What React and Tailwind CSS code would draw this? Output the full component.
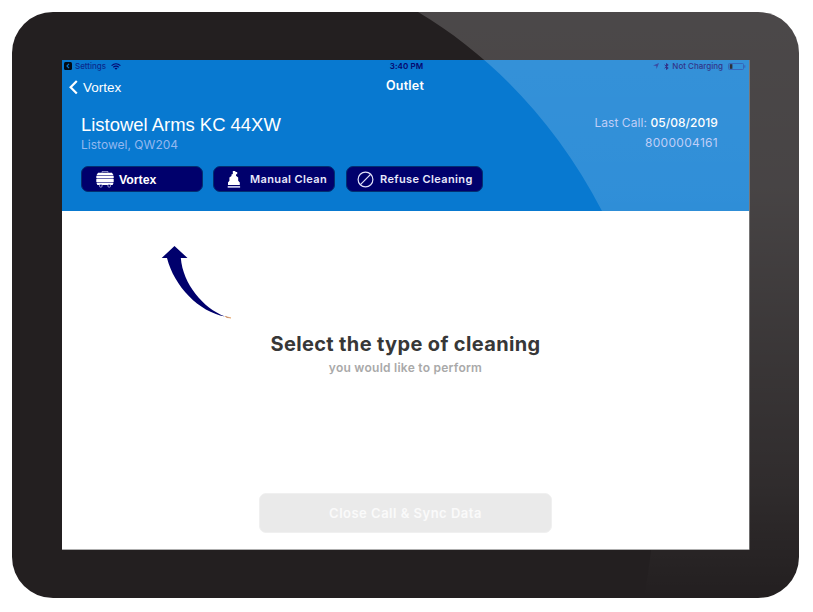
import React from "react";

const inter = "font-['Inter','Liberation_Sans',sans-serif]";
const arial = "font-['Liberation_Sans',Arial,sans-serif]";

function StatusBar() {
  return (
    <div className="flex h-3 items-center text-[8px] leading-3 text-[#0b2a8c]">
      <div className="flex flex-1 items-center pl-0.5">
        <svg className="size-2" viewBox="0 0 8 8">
          <rect width="8" height="8" rx="1.5" fill="#020a14" />
          <path d="M5 1.8 2.9 4 5 6.2" fill="none" stroke="#0879d0" strokeWidth="1.1" />
        </svg>
        <span className="ml-[3px] w-8 font-medium tracking-[-0.03px] whitespace-nowrap">Settings</span>
        <svg className="ml-1 h-[7px] w-2.5" viewBox="0 0 10 7" fill="none" stroke="#06066e" strokeWidth="1.2">
          <path d="M.6 2.6Q5-1.1 9.4 2.6M2.3 4.3Q5 2.1 7.7 4.3" />
          <path d="M5 6.7 3.5 5.3Q5 4.2 6.5 5.3Z" fill="#06066e" stroke="none" />
        </svg>
      </div>
      <span className="pl-[3px] font-semibold text-[#06066e] tracking-[0.1px]">3:40 PM</span>
      <div className="flex flex-1 items-center justify-end pr-[3px]">
        <svg className="h-1.5 w-1.5" viewBox="0 0 6 6" fill="#10278f">
          <path d="M0 2.6 6 0 3.6 6 3.2 2.9Z" />
        </svg>
        <svg className="ml-[5px] h-[7px] w-[5px]" viewBox="0 0 5 7" fill="none" stroke="#06066e" strokeWidth="1">
          <path d="M.6 1.8 4.2 5 2.5 6.5V.5L4.2 2 .6 5.2" />
        </svg>
        <span className="ml-[3px] font-medium text-[#06066e] whitespace-nowrap">Not Charging</span>
        <svg className="ml-[5px] h-[7px] w-[18px]" viewBox="0 0 18 7">
          <rect x=".5" y=".5" width="15" height="6" rx="1" fill="none" stroke="#0b41a8" strokeWidth=".9" />
          <rect x="1.8" y="1.2" width="2.6" height="4.6" fill="#020210" />
          <path d="M16.8 2.3v2.4" stroke="#0b41a8" />
        </svg>
      </div>
    </div>
  );
}

function VortexIcon() {
  return (
    <svg className="h-[17px] w-[18px]" viewBox="0 0 18 17">
      <path d="M6 1.6V.6h6v1" fill="none" stroke="#b9b9e6" strokeWidth=".8" />
      <path d="M2 1.8h14l1.4 2.2H.6Z" fill="#fff" />
      <path d="M.6 4h16.8v1H.6ZM.6 7h16.8v1H.6ZM.6 11h16.8v1H.6Z" fill="#6a6ab0" />
      <path d="M.3 5h17.4v2H.3ZM.3 8h17.4v3H.3ZM.5 12h17l-.9 2H1.4Z" fill="#fff" />
      <g fill="#00006c" stroke="#b9b9e6" strokeWidth=".8">
        <circle cx="4.8" cy="14.8" r="1.4" />
        <circle cx="13.2" cy="14.8" r="1.4" />
      </g>
    </svg>
  );
}

function ManualIcon() {
  return (
    <svg className="h-[17px] w-3.5" viewBox="0 0 14 17" fill="#fff">
      <path d="M5.8 0h2.6v1h1.8v2.2H9v1.6l2.2 1.8v3.2l1.6 1.8V14H1v-2.4l1.4-1.8V6.6L4.5 4.9V3.4L5.8 3Z" />
      <path d="M.7 15h12.4v1.8H.7Z" fill="#c4c4e8" />
    </svg>
  );
}

function RefuseIcon() {
  return (
    <svg className="size-[17px]" viewBox="0 0 17 17" fill="none" stroke="#e2e2fa" strokeWidth="1.2">
      <circle cx="8.5" cy="8.5" r="7.4" />
      <path d="M3.2 13.8 13.8 3.2" />
    </svg>
  );
}

const navy = "flex h-[26px] items-center rounded-[7px] border border-[#033070] bg-[#00006c] whitespace-nowrap text-[#e9e9fb]";

export default function App() {
  return (
    <div className={`h-[612px] w-[813px] overflow-hidden bg-white p-3 ${inter}`}>
      <div className="relative h-[586px] w-[787px] overflow-hidden rounded-[41px] bg-[#231f20] pt-12 pl-[50px]">
        <div className="flex h-[490px] w-[687px] flex-col bg-white">
          <header className="flex h-[151px] flex-col bg-[#0879d0]">
            <StatusBar />
            <div className="flex h-8 items-center text-white">
              <div className="flex flex-1 items-center pl-[7px]">
                <svg className="mb-0.5 h-[15px] w-[9px]" viewBox="0 0 9 15" fill="none" stroke="#fff" strokeWidth="2.2">
                  <path d="M7.8 1 1.6 7.3 7.8 13.6" />
                </svg>
                <span className={`ml-[5px] text-[13.5px] leading-4 ${arial}`}>Vortex</span>
              </div>
              <span className="mb-[3px] text-[12.5px] font-semibold tracking-[0.2px]">Outlet</span>
              <div className="flex-1 pr-2" />
            </div>
            <div className="flex justify-between pt-[11px] pr-[31px] pl-[19px]">
              <div>
                <h1 className={`text-[18.45px] leading-5 text-white ${arial}`}>Listowel Arms KC 44XW</h1>
                <p className="text-[12px] leading-[19px] tracking-[0.02px] text-[#93b8ef]">Listowel, QW204</p>
              </div>
              <div className="-mt-2 pt-1.5 text-right text-[12px] leading-5 text-[#b4c4f6]">
                <p className="tracking-[0.06px]">Last Call: <span className="font-medium text-white">05/08/2019</span></p>
                <p className="tracking-[0.3px]">8000004161</p>
              </div>
            </div>
            <div className="mt-3 flex pl-[19px] text-[11px] font-semibold">
              <button className={`${navy} w-[122px] pl-3.5`}>
                <VortexIcon />
                <span className={`mt-0.5 ml-[5px] text-[12.3px] font-bold text-white ${arial}`}>Vortex</span>
              </button>
              <button className={`${navy} ml-2.5 w-[122px] pl-[13px]`}>
                <ManualIcon />
                <span className="ml-[9px] tracking-[0.37px]">Manual Clean</span>
              </button>
              <button className={`${navy} ml-[11px] w-[137px] pl-2.5`}>
                <RefuseIcon />
                <span className="ml-1.5 tracking-[0.38px]">Refuse Cleaning</span>
              </button>
            </div>
          </header>
          <main className="flex flex-1 flex-col items-center">
            <svg className="mt-[35px] ml-[99px] h-[73px] w-[70px] self-start" viewBox="0 0 70 73">
              <path d="M13.5 0 26.5 12H19.8C22 38 42 62 64 70.5 38 66 13 40 6 12H.7Z" fill="#00006c" />
              <path d="m64 70.3 6 1.7-4-.5Z" fill="#00006c" stroke="#eda35a" strokeWidth=".6" />
            </svg>
            <h2 className="mt-[11px] text-[20px] leading-7 font-bold tracking-[0.35px] text-[#373737]">Select the type of cleaning</h2>
            <p className="mt-0.5 text-[12px] leading-4 font-semibold tracking-[0.25px] text-[#a9a9a9]">you would like to perform</p>
            <button className="mt-[117px] h-10 w-[293px] rounded-[7px] border border-[#f0f0f0] bg-[#eaeaea] pt-0.5 text-[13px] font-semibold tracking-[0.5px] text-[#fafafa]">
              Close Call &amp; Sync Data
            </button>
          </main>
        </div>
        {/* Glass reflection sweeping over bezel and screen */}
        <svg className="pointer-events-none absolute inset-0 h-[586px] w-[787px]" viewBox="0 0 787 586">
          <defs>
            <linearGradient id="glare" x1="0" y1="0" x2="0" y2="1">
              <stop offset="0" stopColor="#fff" stopOpacity=".185" />
              <stop offset=".3" stopColor="#fff" stopOpacity=".165" />
              <stop offset=".8" stopColor="#fff" stopOpacity=".06" />
              <stop offset="1" stopColor="#fff" stopOpacity="0" />
            </linearGradient>
          </defs>
          <path d="M406 0C480 44 545 112 590 199 640 300 660 430 632 586H787V0Z" fill="url(#glare)" />
          <path d="M50 537.5H737.5V48" fill="none" stroke="#8b8b8b" strokeOpacity=".7" />
        </svg>
      </div>
    </div>
  );
}
